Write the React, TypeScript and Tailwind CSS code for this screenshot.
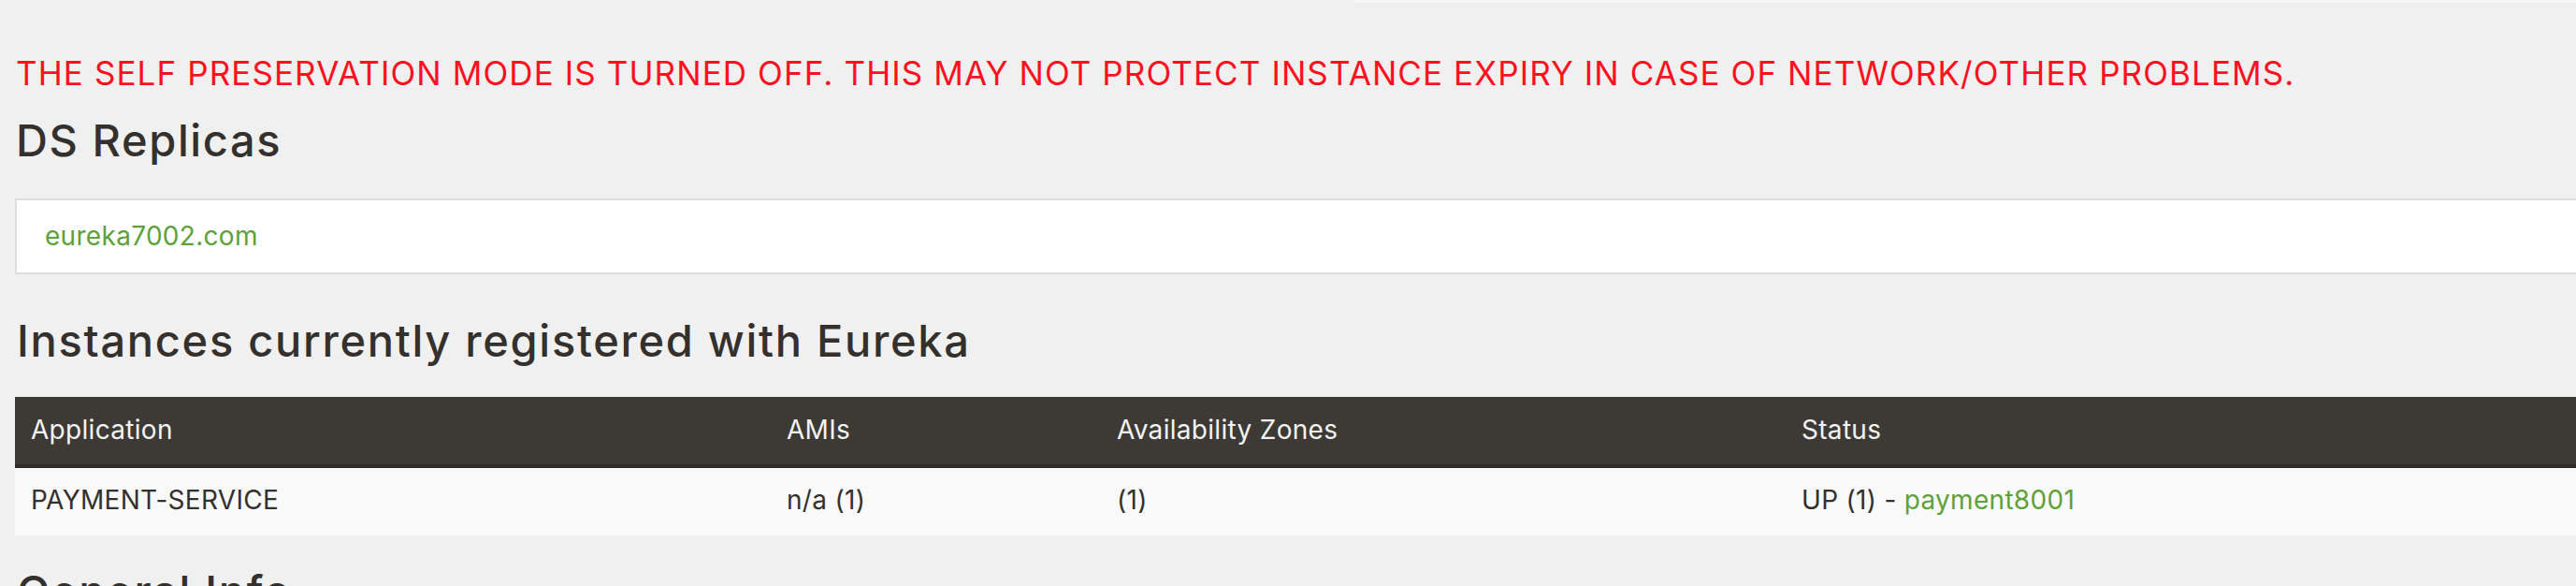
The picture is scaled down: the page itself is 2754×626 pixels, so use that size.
const columns = [
  { label: "Application", width: "w-[808px]" },
  { label: "AMIs", width: "w-[353px]" },
  { label: "Availability Zones", width: "w-[732px]" },
  { label: "Status", width: "flex-1" },
]

const apps = [
  {
    name: "PAYMENT-SERVICE",
    amis: "n/a (1)",
    zones: "(1)",
    status: "UP (1) - ",
    instance: "payment8001",
  },
]

export default function App() {
  return (
    <main className="relative h-[626px] w-full overflow-hidden bg-[#f0f0f0] font-['Inter','Liberation_Sans',sans-serif] text-[#34302d]">
      {/* bottom edge of the nav bar above */}
      <div className="ml-[1448px] h-[3px] bg-[#f7f7f7]" />

      <div className="w-[2800px] pl-[16px]">
        <p className="mt-[55px] pl-[1px] text-[35px] leading-[40px] tracking-[1.1px] text-[#ff1020]">
          THE SELF PRESERVATION MODE IS TURNED OFF. THIS MAY NOT PROTECT INSTANCE EXPIRY IN CASE OF NETWORK/OTHER
          PROBLEMS.
        </p>

        <h2 className="mt-[24px] pl-[1px] text-[47px] font-medium leading-[56px] tracking-[1.6px]">DS Replicas</h2>

        {/* replicas */}
        <div className="mt-[34px] border-2 border-[#dedede] bg-white px-[30px] pt-[21px] pb-[22px]">
          <a className="text-[28px] leading-[34px] tracking-[0.3px] text-[#5ea13a]">eureka7002.com</a>
        </div>

        <h2 className="mt-[43px] pl-[2px] text-[47px] font-medium leading-[56px] tracking-[1.7px]">
          Instances currently registered with Eureka
        </h2>

        {/* instances table */}
        <div className="mt-[32px] text-[28px] leading-[34px] tracking-[0.3px]">
          <div className="flex border-b-4 border-[#2f2c29] bg-[#3d3a35] pt-[18px] pb-[20px] text-[#f4f4f4]">
            {columns.map((col) => (
              <div key={col.label} className={`${col.width} px-[17px]`}>
                {col.label}
              </div>
            ))}
          </div>
          {apps.map((app) => (
            <div key={app.name} className="flex bg-[#f9f9f9] pt-[17px] pb-[21px]">
              <div className="w-[808px] px-[17px]">{app.name}</div>
              <div className="w-[353px] px-[17px]">{app.amis}</div>
              <div className="w-[732px] px-[17px]">{app.zones}</div>
              <div className="flex-1 px-[17px]">
                {app.status}
                <a className="text-[#5ea13a]">{app.instance}</a>
              </div>
            </div>
          ))}
        </div>

        <h2 className="mt-[32px] pl-[2px] text-[47px] font-medium leading-[56px] tracking-[1.7px]">General Info</h2>
      </div>
    </main>
  )
}
